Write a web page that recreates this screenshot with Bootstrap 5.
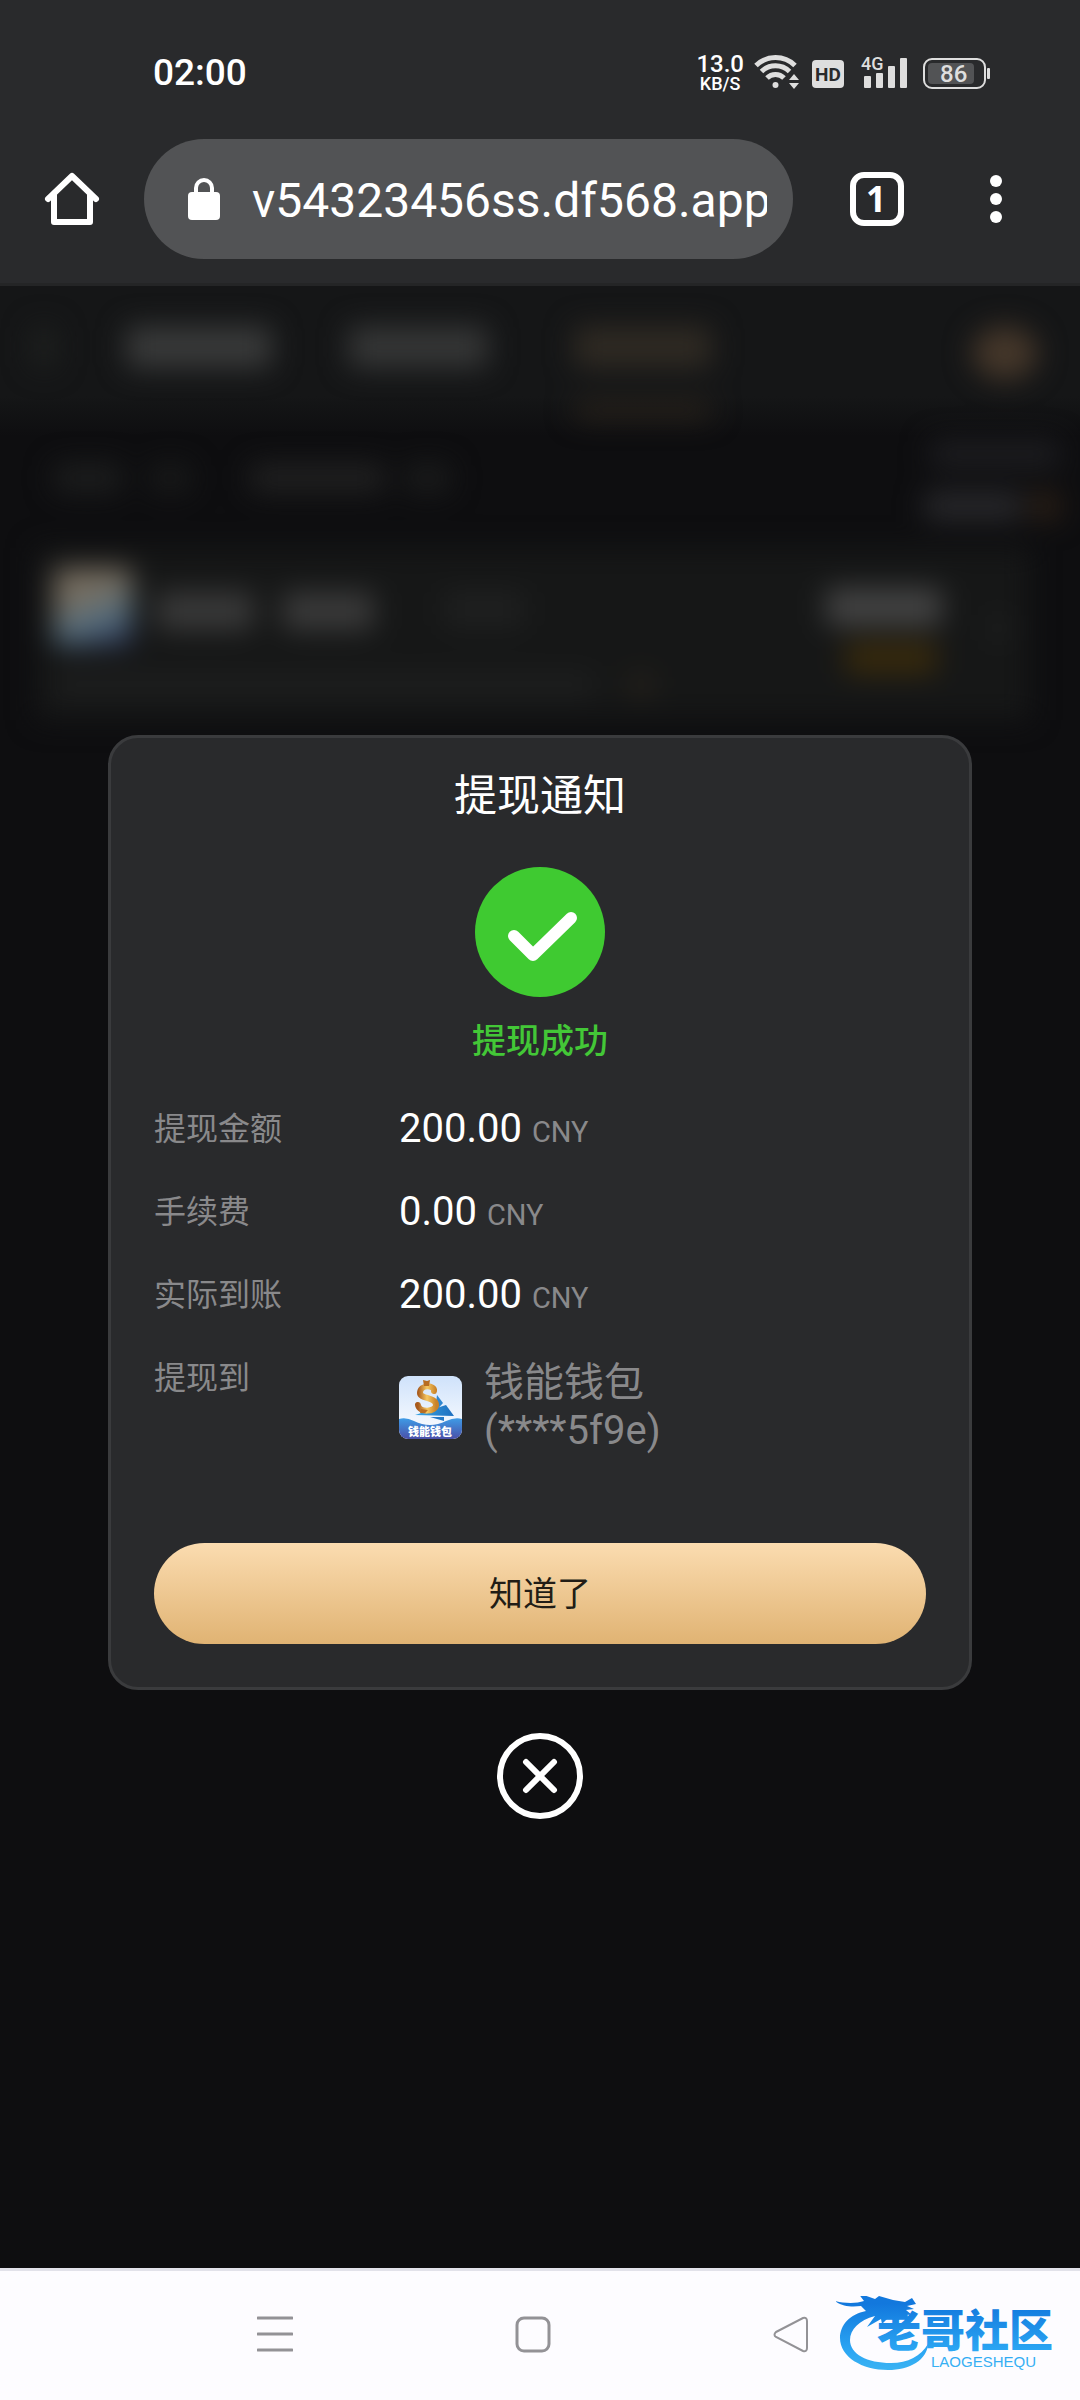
<!DOCTYPE html>
<html lang="zh-CN">
<head>
<meta charset="utf-8">
<meta name="viewport" content="width=device-width, initial-scale=1">
<title>提现通知</title>
<link rel="stylesheet" href="https://cdn.jsdelivr.net/npm/bootstrap@5.3.0/dist/css/bootstrap.min.css">
<style>
  body { font-family: Roboto, "Noto Sans CJK SC", sans-serif; background: #0e0e10; color: #fff; }
  .chrome { background: #292a2c; border-bottom: 3px solid #242526; }
  .status { height: 139px; padding: 6px 90px 0 153px; }
  .clock { font-size: 37px; font-weight: 500; line-height: 48px; }
  .speed { font-size: 24px; line-height: 22px; font-weight: 500; }
  .speed small { display: block; font-size: 18px; line-height: 18px; }
  .toolbar { padding: 0 76px 24px 44px; gap: 44px; }
  .tool-btn { border: 0; padding: 0; background: none; line-height: 0; }
  .address { height: 120px; min-width: 0; background: #525355; border-radius: 60px; padding: 0 26px 0 44px; gap: 32px; }
  .address input { background: none; border: 0; outline: 0; padding: 4px 0 0; color: #fff; font-size: 48px; text-align: right; min-width: 0; }
  .tools-right { padding-left: 13px; gap: 84px; }

  .stage { background: linear-gradient(#151617 0, #151617 110px, #0e0e10 150px); }
  .page-blur { filter: blur(14px); }
  .bar { display: block; border-radius: 6px; }
  .topbar { height: 134px; padding: 40px 42px 0 32px; }
  .tab-bar { height: 42px; }
  .under { height: 16px; margin-top: 34px; background: #2b241c; }
  .filters { height: 128px; padding: 20px 20px 0 54px; }
  .filters .bar { height: 28px; }
  .record { margin: 0 50px 0 36px; height: 172px; padding: 20px 22px 0 18px; background: #161717; }
  .wallet-dim { width: 78px; height: 78px; background: linear-gradient(160deg, #746b5e 0, #776e60 35%, #567080 65%, #20264a 100%); }

  .overlay { inset: 0; }
  .notice { width: 80%; background: #292a2c; border: 3px solid #3a3b3d; border-radius: 30px; padding: 34px 43px 43px; color: #fff; }
  .notice h1 { font-size: 43px; line-height: 48px; font-weight: 400; margin: 0 0 47px; }
  .state { color: #43c737; font-size: 34px; line-height: 48px; font-weight: 500; margin: 20px 0 40px; }
  .detail { margin: 0 0 35px; font-size: 40px; line-height: 48px; }
  .detail dt { flex: 0 0 245px; font-size: 32px; font-weight: 400; color: #89898b; }
  .detail dd { margin: 0; }
  .unit { font-size: 29px; line-height: 1; color: #89898b; }
  .target { margin-bottom: 88px; }
  .target dd { padding-top: 5px; gap: 22px; color: #89898b; }
  .confirm { height: 101px; border: 0; border-radius: 51px; background: linear-gradient(#fbdcb0, #e0b373); color: #221d16; font-size: 34px; line-height: 48px; }
  .close-round { margin-top: 43px; }

  .sysnav { height: 132px; background: #fdfcff; border-top: 3px solid #e2e2ea; padding: 0 18px 3px 257px; }
  .sysnav .keys { width: 552px; }
  .brand { width: 226px; height: 76px; }
</style>
</head>
<body class="min-vh-100 d-flex flex-column">

<header class="chrome">
  <div class="status d-flex align-items-center justify-content-between">
    <span class="clock">02:00</span>
    <div class="d-flex align-items-center">
      <div class="speed text-center">13.0<small>KB/S</small></div>
      <!-- wifi, HD, signal and battery -->
      <svg width="246" height="40" viewBox="0 2 246 40" fill="#dedede" font-family="Roboto, sans-serif" aria-hidden="true">
        <g fill="none" stroke="#dedede" stroke-width="5">
          <path d="M12 14.500a28 28 0 0 1 39 0" />
          <path d="M17.500 20.500a20 20 0 0 1 28 0" />
          <path d="M23 27a12 12 0 0 1 17 0" />
        </g>
        <circle cx="31.500" cy="34" r="3"/>
        <path d="M50 23l5 6H45zM50 38l5-6H45z"/>
        <rect x="68" y="9" width="32" height="28" rx="4"/>
        <text x="84" y="30" text-anchor="middle" font-size="19" font-weight="700" fill="#292a2c">HD</text>
        <text x="117" y="19" font-size="18" font-weight="500">4G</text>
        <rect x="120" y="25" width="7" height="12" rx="1"/>
        <rect x="132" y="22" width="7" height="15" rx="1"/>
        <rect x="144" y="15" width="7" height="22" rx="1"/>
        <rect x="156" y="7" width="7" height="30" rx="1"/>
        <rect x="180" y="8" width="61" height="29" rx="8" fill="none" stroke="#dedede" stroke-width="2"/>
        <rect x="184" y="12" width="46" height="21" rx="4" fill="#525355"/>
        <rect x="243" y="17" width="3" height="11" rx="1"/>
        <text x="196" y="31" font-size="24" font-weight="500">86</text>
      </svg>
    </div>
  </div>
  <div class="toolbar d-flex align-items-center">
    <button class="tool-btn" type="button" aria-label="主页">
      <svg width="56" height="56" viewBox="0 0 56 56" fill="none" stroke="#fff" stroke-width="6" stroke-linecap="round" stroke-linejoin="round">
        <path d="M4 28L28 5l24 23M10 24v27h36V24"/>
      </svg>
    </button>
    <div class="address d-flex align-items-center flex-grow-1">
      <svg class="flex-shrink-0" width="32" height="42" viewBox="0 0 32 42" aria-hidden="true">
        <rect y="14" width="32" height="28" rx="4" fill="#fff"/>
        <path d="M8 16v-6a8 8 0 0 1 16 0v6" fill="none" stroke="#fff" stroke-width="4"/>
      </svg>
      <input class="flex-grow-1" type="text" aria-label="网址" value="v54323456ss.df568.app">
    </div>
    <div class="tools-right d-flex align-items-center flex-shrink-0">
      <button class="tool-btn" type="button" aria-label="标签页">
        <svg width="54" height="54" viewBox="0 0 54 54">
          <rect x="3" y="3" width="48" height="48" rx="11" fill="none" stroke="#fff" stroke-width="6"/>
          <text x="26" y="40" text-anchor="middle" font-family="Noto Sans, sans-serif" font-size="35" font-weight="700" fill="#fff">1</text>
        </svg>
      </button>
      <button class="tool-btn" type="button" aria-label="菜单">
        <svg width="16" height="54" viewBox="0 0 16 54" fill="#fff">
          <circle cx="8" cy="9" r="6"/><circle cx="8" cy="27" r="6"/><circle cx="8" cy="45" r="6"/>
        </svg>
      </button>
    </div>
  </div>
</header>

<main class="stage position-relative flex-grow-1 overflow-hidden">
  <!-- account page dimmed and blurred behind the notice -->
  <div class="page-blur" aria-hidden="true">
    <div class="topbar d-flex">
      <i class="bar tab-bar" style="width:24px;background:#1e201f"></i>
      <i class="bar tab-bar" style="width:146px;margin-left:70px;background:#393a3a"></i>
      <i class="bar tab-bar" style="width:140px;margin-left:76px;background:#353636"></i>
      <div style="width:138px;margin-left:86px">
        <i class="bar tab-bar" style="background:#2f2a23"></i>
        <i class="bar under"></i>
      </div>
      <i class="bar rounded-circle ms-auto" style="width:66px;height:54px;background:#45372a"></i>
    </div>
    <div class="filters d-flex">
      <i class="bar mt-4" style="width:68px;background:#1d1e1e"></i>
      <i class="bar mt-4" style="width:40px;margin-left:28px;background:#191a1a"></i>
      <i class="bar mt-4" style="width:135px;margin-left:60px;background:#212121"></i>
      <i class="bar mt-4" style="width:45px;margin-left:20px;background:#1b1c1c"></i>
      <div class="ms-auto d-flex flex-column align-items-end">
        <i class="bar" style="width:130px;background:#1d1d20"></i>
        <div class="d-flex mt-4">
          <i class="bar" style="width:98px;background:#29292c"></i>
          <i class="bar ms-2" style="width:30px;background:#2c2016"></i>
        </div>
      </div>
    </div>
    <div class="record">
      <div class="d-flex">
        <i class="bar wallet-dim"></i>
        <i class="bar mt-4" style="width:98px;height:38px;margin-left:24px;background:#393939"></i>
        <i class="bar mt-4" style="width:92px;height:38px;margin-left:28px;background:#3a3a3a"></i>
        <i class="bar mt-4" style="width:80px;height:34px;margin-left:70px;background:#1f2020"></i>
        <div class="ms-auto d-flex flex-column align-items-end me-5">
          <i class="bar" style="width:116px;height:38px;margin-top:20px;background:#434343"></i>
          <i class="bar" style="width:92px;height:32px;margin-top:16px;margin-right:5px;background:#382a0c"></i>
        </div>
        <i class="bar" style="width:18px;height:28px;margin-top:46px;background:#1e1f1f"></i>
      </div>
      <div class="d-flex">
        <i class="bar" style="width:540px;height:22px;background:#1e1f1f"></i>
        <i class="bar" style="width:26px;height:22px;margin-left:34px;background:#26211a"></i>
      </div>
    </div>
  </div>

  <div class="overlay position-absolute d-flex flex-column align-items-center justify-content-center" role="dialog" aria-labelledby="notice-title">
    <section class="notice">
      <h1 id="notice-title" class="text-center">提现通知</h1>
      <svg class="d-block mx-auto" width="130" height="130" viewBox="0 0 130 130" aria-hidden="true">
        <circle cx="65" cy="65" r="65" fill="#3fca31"/>
        <path d="M39 69l19 19 38-37" fill="none" stroke="#fff" stroke-width="12" stroke-linecap="round" stroke-linejoin="round"/>
      </svg>
      <p class="state text-center">提现成功</p>
      <dl class="m-0">
        <div class="detail d-flex"><dt>提现金额</dt><dd>200.00 <span class="unit">CNY</span></dd></div>
        <div class="detail d-flex"><dt>手续费</dt><dd>0.00 <span class="unit">CNY</span></dd></div>
        <div class="detail d-flex"><dt>实际到账</dt><dd>200.00 <span class="unit">CNY</span></dd></div>
        <div class="detail target d-flex">
          <dt>提现到</dt>
          <dd class="d-flex align-items-center">
            <svg width="63" height="63" viewBox="0 0 63 63" aria-hidden="true">
              <defs>
                <linearGradient id="sky" x2="0" y2="1"><stop stop-color="#cfe2fb"/><stop offset="1" stop-color="#fff"/></linearGradient>
                <linearGradient id="sea" x2="0" y2="1"><stop stop-color="#3e9be6"/><stop offset="1" stop-color="#4a4fa8"/></linearGradient>
                <linearGradient id="gold" x2="1" y2="0"><stop stop-color="#a85a1c"/><stop offset=".5" stop-color="#f6c863"/><stop offset="1" stop-color="#c98228"/></linearGradient>
                <linearGradient id="sail" x2="1" y2="0"><stop stop-color="#3aa5e2"/><stop offset="1" stop-color="#1d6fc0"/></linearGradient>
                <clipPath id="tile"><rect width="63" height="63" rx="9"/></clipPath>
              </defs>
              <g clip-path="url(#tile)">
                <rect width="63" height="63" fill="url(#sky)"/>
                <path d="M38 19l6 8-8 9z" fill="#2f86cf"/>
                <path d="M16 39l31-10 8 11z" fill="url(#sail)"/>
                <path d="M35 15c1-6-14-7-14 2 0 6 16 4 16 12 0 7-17 8-18 0" fill="none" stroke="url(#gold)" stroke-width="6" stroke-linecap="round"/>
                <path d="M24 4l4 1 3-1-1 6h-5zM22 33l7 1-3 3h-5z" fill="#b86d22"/>
                <path d="M31 41h14v4z" fill="#2479c6"/>
                <path d="M0 43q7-2 15 2 16 8 32 0 9-4 16-2v20H0z" fill="url(#sea)"/>
                <text x="31" y="60" text-anchor="middle" font-family="Noto Sans CJK SC, sans-serif" font-size="11" font-weight="900" fill="#fff">钱能钱包</text>
              </g>
            </svg>
            <span>钱能钱包<br>(****5f9e)</span>
          </dd>
        </div>
      </dl>
      <button class="confirm w-100" type="button">知道了</button>
    </section>
    <button class="tool-btn close-round" type="button" aria-label="关闭">
      <svg width="86" height="86" viewBox="0 0 86 86" fill="none" stroke="#fff" stroke-width="6" stroke-linecap="round">
        <circle cx="43" cy="43" r="40"/><path d="M29 29l28 28M57 29L29 57"/>
      </svg>
    </button>
  </div>
</main>

<footer class="sysnav d-flex align-items-center justify-content-between">
  <div class="keys d-flex align-items-center justify-content-between">
    <button class="tool-btn" type="button" aria-label="最近任务">
      <svg width="36" height="38" viewBox="0 0 36 38" stroke="#939296" stroke-width="3" stroke-linecap="round"><path d="M1 3h34M1 19h34M1 35h34"/></svg>
    </button>
    <button class="tool-btn" type="button" aria-label="主屏幕">
      <svg width="36" height="38" viewBox="0 0 36 38"><rect x="2" y="3" width="32" height="33" rx="7" fill="none" stroke="#939296" stroke-width="3"/></svg>
    </button>
    <button class="tool-btn" type="button" aria-label="返回">
      <svg width="36" height="38" viewBox="0 0 36 38"><path d="M3 17L30 3q4-1 4 3v27q0 4-4 3L3 22q-3-2 0-5z" fill="none" stroke="#939296" stroke-width="2"/></svg>
    </button>
  </div>
  <svg class="brand" viewBox="0 0 226 76" role="img" aria-label="老哥社区 LAOGESHEQU">
    <defs>
      <linearGradient id="blue" gradientUnits="userSpaceOnUse" x1="0" y1="8" x2="0" y2="74"><stop stop-color="#1278dd"/><stop offset=".7" stop-color="#2ba6f3"/><stop offset="1" stop-color="#3bb3f3"/></linearGradient>
    </defs>
    <g fill="url(#blue)">
      <path d="M30 15C14 18 4 29 4 42c0 19 22 32 48 32 22 0 39-10 40-26-7 12-20 19-37 19-24 0-41-9-41-23 0-10 9-20 25-24l-8 11 14-8 1 5 7-7 13 1-5-4 15 1-6-5 8-1-7-3 9-2-4-6-7 4-12-2-14-4-4 3-17-6 6 8c-8 3-22 2-29 0 7 6 18 6 26 5z"/>
      <text x="41" y="51" font-family="Noto Sans CJK SC, sans-serif" font-size="44" font-weight="900">老哥社区</text>
      <text x="95" y="71" font-family="Liberation Sans, sans-serif" font-size="15">LAOGESHEQU</text>
    </g>
  </svg>
</footer>

<script src="https://cdn.jsdelivr.net/npm/bootstrap@5.3.0/dist/js/bootstrap.bundle.min.js"></script>
</body>
</html>
